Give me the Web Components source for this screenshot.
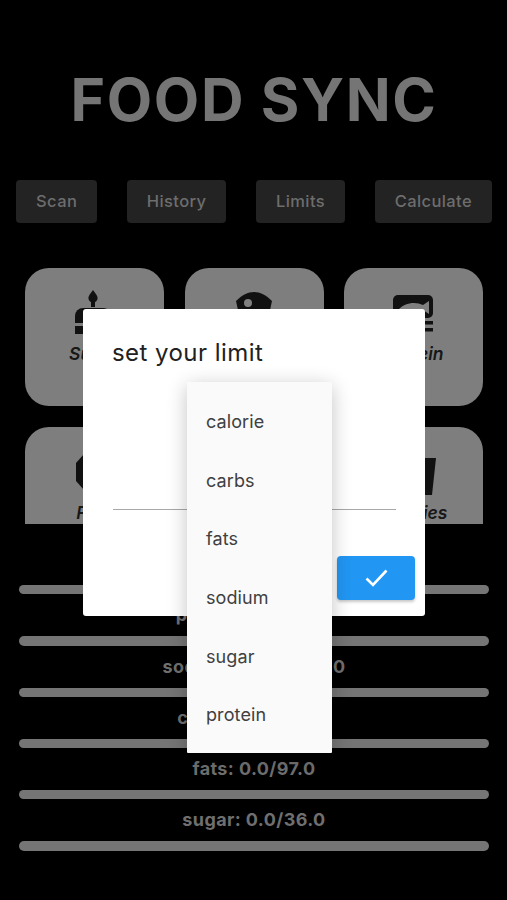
<!DOCTYPE html>
<html lang="en"><head><meta charset="utf-8"><title>Food Sync</title>
<style>html,body{margin:0;background:#000}body{font-family:Inter,"Liberation Sans",sans-serif}</style>
</head><body>
<food-app>
  <food-title>FOOD SYNC</food-title>
  <food-nav>
    <nav-button>Scan</nav-button><nav-button>History</nav-button><nav-button>Limits</nav-button><nav-button>Calculate</nav-button>
  </food-nav>
  <card-grid>
    <food-card label="Sugar" icon="cake"></food-card>
    <food-card label="Carbs" icon="eye"></food-card>
    <food-card label="Protein" icon="fish"></food-card>
    <food-card label="Fats" icon="hex"></food-card>
    <food-card label="Sodium" icon="eye"></food-card>
    <food-card label="calories" icon="glass"></food-card>
  </card-grid>
  <meter-list>
    <food-meter></food-meter>
    <food-meter>protein: 0.0/50.0</food-meter>
    <food-meter>sodium: 0.0/2300.0</food-meter>
    <food-meter>carbs: 0.0/275.0</food-meter>
    <food-meter>fats: 0.0/97.0</food-meter>
    <food-meter>sugar: 0.0/36.0</food-meter>
  </meter-list>
  <limit-dialog heading="set your limit"></limit-dialog>
  <limit-menu>
    <menu-row>calorie</menu-row><menu-row>carbs</menu-row><menu-row>fats</menu-row><menu-row>sodium</menu-row><menu-row>sugar</menu-row><menu-row>protein</menu-row>
  </limit-menu>
</food-app>
<script>
function def(name, css, html){
  customElements.define(name, class extends HTMLElement{
    connectedCallback(){
      if(this.shadowRoot) return;
      const r=this.attachShadow({mode:'open'});
      r.innerHTML='<style>'+css+'</style>'+(typeof html==='function'?html(this):html);
    }
  });
}
const ICONS={
 cake:'<path d="M18 0c3 4 4.600 6 4.600 8a4.600 4.600 0 0 1-9.200 0C13.400 6 15 4 18 0z"/><rect x="16" y="11" width="4" height="6"/><path d="M0 26a8 8 0 0 1 8-8h20a8 8 0 0 1 8 8v7H0z"/><path d="M0 36h36v8H0z"/>',
 eye:'<g transform="translate(2 2)"><path d="M0 9C6 3 12 0 18 0s12 3 18 9l-2 9H2z"/><circle cx="12" cy="11" r="4" fill="#808080"/></g>',
 fish:'<g transform="translate(-1 5)"><rect x="0" y="0" width="40" height="23" rx="5"/><path d="M5 15c6-7 17-9 25-5l6-4v13l-6-4c-8 4-18 3-25 0z" fill="#808080"/><rect x="0" y="26" width="40" height="3.500"/><rect x="0" y="33" width="40" height="3.500"/></g>',
 hex:'<path transform="translate(1 5)" d="M8 0h20l8 9v18l-8 9H8l-8-9V9z"/>',
 glass:'<path transform="translate(4 9)" d="M0 0h38l-4 37H4z"/>'
};
def('food-app',':host{display:block;position:relative;width:507px;height:900px;background:#000;overflow:hidden}','<slot></slot>');
def('food-title',':host{display:block;height:180px;padding:67px 0 0 1px;box-sizing:border-box;text-align:center;color:#757575;font:700 59px/66px Inter,sans-serif;letter-spacing:1.600px}','<slot></slot>');
def('food-nav',':host{display:flex;justify-content:space-between;padding:0 15px 0 16px}','<slot></slot>');
def('nav-button',':host{display:block;height:43px;padding:0 20px;background:#232323;border-radius:4px;color:#6d6d6d;font:500 16.500px/43px Inter,sans-serif;letter-spacing:.4px}','<slot></slot>');
def('card-grid',':host{display:grid;grid-template-columns:repeat(3,139px);grid-auto-rows:138px;column-gap:20.500px;row-gap:21px;margin:45px 24px 0 25px;height:256px;overflow:hidden}','<slot></slot>');
def('food-card',':host{display:flex;flex-direction:column;align-items:center;background:#7e7e7e;border-radius:24px;color:#171717;font:italic 600 17.500px/22px Inter,sans-serif;box-sizing:border-box;padding-top:22px}svg{display:block;fill:#111;height:44px;width:40px;overflow:visible;margin-bottom:9px}span{display:block}',
 el=>`<svg viewBox="0 0 40 44" aria-hidden="true">${ICONS[el.getAttribute('icon')]}</svg><span>${el.getAttribute('label')}</span>`);
def('meter-list',':host{display:flex;flex-direction:column;margin:19px 18px 0 19px}','<slot></slot>');
def('food-meter',':host{display:flex;flex-direction:column;height:51.300px;color:#6f6f6f;font:700 18px/42px Inter,sans-serif;letter-spacing:.4px;text-align:center}div{height:42px}i{display:block;height:9.300px;background:#757575;border-radius:5px}','<div><slot></slot></div><i></i>');
def('limit-dialog',`:host{position:absolute;left:83px;top:309px;width:342px;height:307px;box-sizing:border-box;padding:29px 10px 16px 29px;background:#fff;border-radius:3px;display:flex;flex-direction:column;color:#212121}
 h2{margin:0;font:400 24px/30px Inter,sans-serif;letter-spacing:.45px}
 hr{border:0;height:1px;background:#a8a8a8;margin:141px 19px 0 1px;flex:none}
 button{align-self:flex-end;margin-top:46px;width:78px;height:44px;border:0;border-radius:4px;background:#2196f3;box-shadow:0 2px 3px rgba(0,0,0,.22);display:flex;align-items:center;justify-content:center;padding:0}
 svg{width:24px;height:24px;fill:none;stroke:#fff;stroke-width:2.600}`,
 el=>`<h2>${el.getAttribute('heading')}</h2><hr><button aria-label="confirm"><svg viewBox="0 0 24 24"><path d="M2.500 12.500l6.500 6.500L22.500 4.500"/></svg></button>`);
def('limit-menu',':host{position:absolute;left:187px;top:382px;width:145px;height:371px;box-sizing:border-box;padding-top:11px;background:#fafafa;border-radius:1px;box-shadow:0 4px 20px rgba(0,0,0,.24);display:flex;flex-direction:column}','<slot></slot>');
def('menu-row',':host{display:block;height:58.700px;padding-left:19px;color:#404040;font:400 18px/58.700px Inter,sans-serif;letter-spacing:.1px}','<slot></slot>');
</script>
</body></html>
